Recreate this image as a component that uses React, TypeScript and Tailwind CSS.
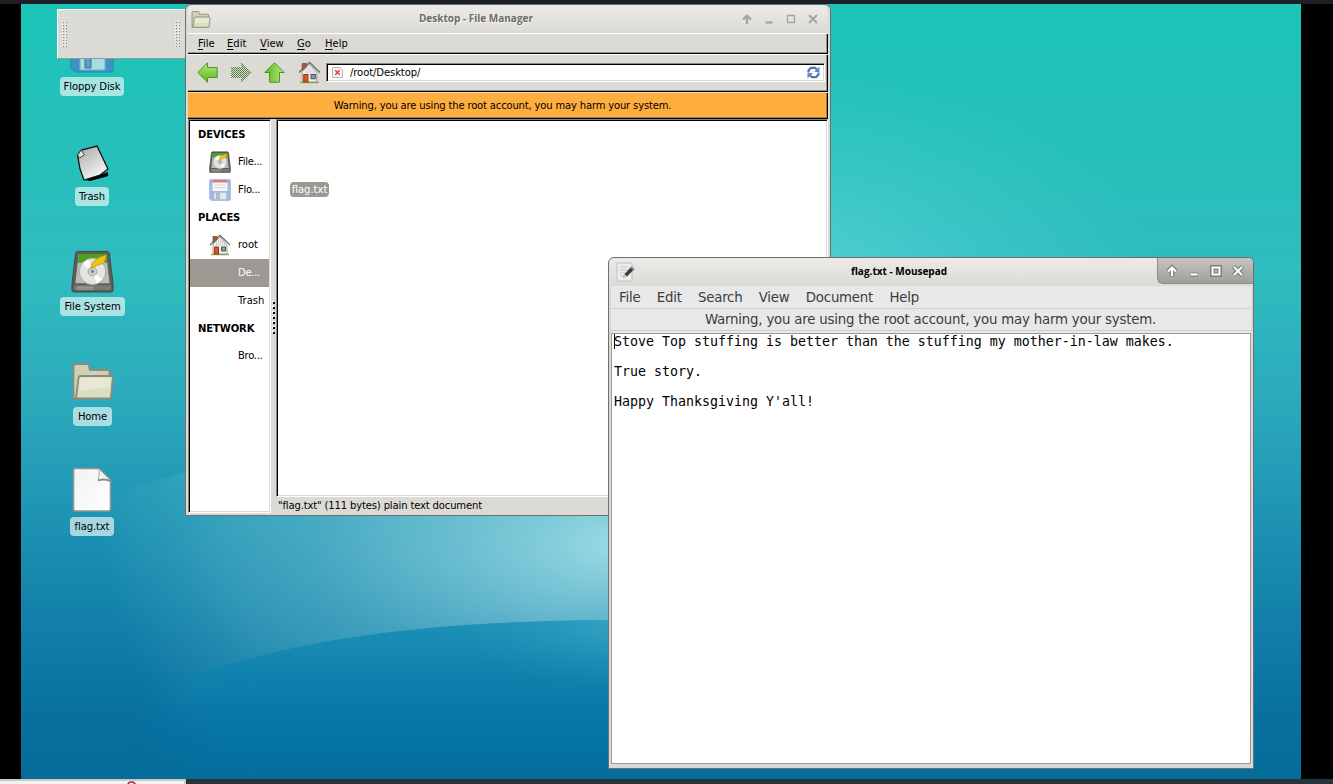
import React from "react";

const SANS = "font-['DejaVu_Sans',sans-serif]";

function Wallpaper() {
  return (
    <svg className="block h-full w-full" viewBox="21 4 1280 775" preserveAspectRatio="none">
      <defs>
        <linearGradient id="sky" x1="0" y1="0" x2="0" y2="1">
          <stop offset="0" stopColor="#1bc4b6" />
          <stop offset="0.35" stopColor="#2fbcbe" />
          <stop offset="0.52" stopColor="#2ba9bc" />
          <stop offset="0.65" stopColor="#1f95b4" />
          <stop offset="0.8" stopColor="#117fa9" />
          <stop offset="0.92" stopColor="#08709f" />
          <stop offset="1" stopColor="#066c9a" />
        </linearGradient>
        <linearGradient id="sea" x1="0" y1="0" x2="0" y2="1">
          <stop offset="0" stopColor="#1c90b6" />
          <stop offset="0.2" stopColor="#1488b1" />
          <stop offset="0.55" stopColor="#0a79a8" />
          <stop offset="0.8" stopColor="#0472a2" />
          <stop offset="1" stopColor="#066d9b" />
        </linearGradient>
        <linearGradient id="seaFade" x1="130" y1="0" x2="220" y2="0" gradientUnits="userSpaceOnUse">
          <stop offset="0" stopColor="#fff" stopOpacity="0" />
          <stop offset="1" stopColor="#fff" />
        </linearGradient>
        <mask id="seaMask" maskUnits="userSpaceOnUse" x="21" y="4" width="1280" height="775">
          <rect x="21" y="4" width="1280" height="775" fill="url(#seaFade)" />
        </mask>
        <radialGradient id="core" cx="0.5" cy="0.5" r="0.5">
          <stop offset="0" stopColor="#a5e0e8" stopOpacity="0.95" />
          <stop offset="0.35" stopColor="#92d5e0" stopOpacity="0.6" />
          <stop offset="0.7" stopColor="#7cc8d6" stopOpacity="0.2" />
          <stop offset="1" stopColor="#6cc0d0" stopOpacity="0" />
        </radialGradient>
        <radialGradient id="upper" cx="0.5" cy="0.5" r="0.5">
          <stop offset="0" stopColor="#66dcdf" stopOpacity="0.75" />
          <stop offset="0.5" stopColor="#5cd6da" stopOpacity="0.35" />
          <stop offset="1" stopColor="#50d2d0" stopOpacity="0" />
        </radialGradient>
        <radialGradient id="seaGlow" cx="0.5" cy="0.5" r="0.5">
          <stop offset="0" stopColor="#4cb4ce" stopOpacity="0.8" />
          <stop offset="1" stopColor="#2a9bc0" stopOpacity="0" />
        </radialGradient>
        <radialGradient id="band" cx="400" cy="530" r="300" gradientUnits="userSpaceOnUse">
          <stop offset="0" stopColor="#7ccbd8" stopOpacity="0.36" />
          <stop offset="0.6" stopColor="#7ccbd8" stopOpacity="0.24" />
          <stop offset="1" stopColor="#7ccbd8" stopOpacity="0" />
        </radialGradient>
        <clipPath id="seaClip">
          <path d="M130 702C250 645 400 619 640 620C900 621 1120 680 1230 779H130Z" />
        </clipPath>
      </defs>
      <rect x="21" y="4" width="1280" height="775" fill="url(#sky)" />
      <ellipse cx="760" cy="290" rx="400" ry="230" fill="url(#upper)" />
      <path d="M40 525Q180 462 330 440H800V779H40Z" fill="url(#band)" />
      <ellipse cx="630" cy="545" rx="450" ry="210" fill="url(#core)" />
      <g mask="url(#seaMask)">
        <path d="M130 702C250 645 400 619 640 620C900 621 1120 680 1230 779H130Z" fill="url(#sea)" />
        <ellipse cx="680" cy="620" rx="250" ry="70" fill="url(#seaGlow)" clipPath="url(#seaClip)" />
      </g>
    </svg>
  );
}

function FolderIcon({ className }: { className: string }) {
  return (
    <svg className={className} viewBox="0 0 42 37">
      <path d="M1.500 35.500V3q0-2 2-2H15q1.500 0 2 2l1 4h18q1.500 0 1.500 1.500V35z" fill="#cfd0b4" stroke="#8b8c7c" strokeWidth="1.800" />
      <path d="M4 35.500L6.500 15q.2-2 2-2H39q2 0 1.800 2L39 33.500q-.2 2-2 2z" fill="#dcdec2" stroke="#8b8c7c" strokeWidth="1.800" />
      <path d="M8.500 15h30l-1.200 10Q20 25 7 28z" fill="#eceddd" opacity=".7" />
    </svg>
  );
}

function DriveIcon({ className }: { className: string }) {
  return (
    <svg className={className} viewBox="0 0 44 44">
      <path d="M7 1.500h30q2 0 2.300 2L43 35v6q0 2-2 2H3q-2 0-2-2v-6L4.700 3.500Q5 1.500 7 1.500z" fill="#5c5e5a" stroke="#454745" />
      <path d="M8 4h28l3.500 30h-35z" fill="#b9bdb6" />
      <path d="M8 4h28l1 9H7z" fill="#4fa01d" />
      <circle cx="22" cy="22" r="13.500" fill="#e4e5e3" stroke="#a9aca6" />
      <path d="M22 22L12 14a13 13 0 0 1 6-4zM22 22l10 8a13 13 0 0 1-6 4z" fill="#fff" />
      <circle cx="22" cy="22" r="4.500" fill="#cdd0ca" stroke="#a4a6a1" />
      <circle cx="22" cy="22" r="1.500" fill="#777" />
      <path d="M36 5l-2 8-8 3-6 3 2-6 6-5z" fill="#edc31c" stroke="#c9a208" />
      <path d="M3 36h38v5H3z" fill="#777a76" />
      <path d="M6 38h17M6 40h17" stroke="#a8aba6" />
    </svg>
  );
}

function FloppyIcon({ className, blue }: { className: string; blue?: boolean }) {
  return (
    <svg className={className} viewBox="0 0 44 44">
      <path d="M3 1h38q2 0 2 2v38q0 2-2 2H5l-4-4V3q0-2 2-2z" fill={blue ? "#3c93c4" : "#9fbbe2"} stroke={blue ? "#2f83b4" : "#88a5cf"} />
      <path d="M7 2h30v22H7z" fill="#f7f7f7" />
      <path d="M7 2h30v5H7z" fill="#e8737a" />
      <path d="M10 12h24M10 17h24" stroke="#c8ccd0" strokeWidth="1.500" />
      <path d="M10 27h25v14H10z" fill={blue ? "#a9dbe0" : "#e3e8ec"} stroke={blue ? "#6db4c4" : "#a4b2c4"} />
      <path d="M15 29h6v10h-6z" fill={blue ? "#5ba3bd" : "#b9c3cf"} stroke={blue ? "#2c7096" : "#8592a4"} />
    </svg>
  );
}

function HomeIcon({ className }: { className: string }) {
  return (
    <svg className={className} viewBox="0 0 22 22">
      <path d="M2 20.500h18" stroke="#8fae3c" strokeWidth="1.500" />
      <path d="M4 2.500h4v6H4z" fill="#c6512b" stroke="#8a3a22" strokeWidth=".8" />
      <path d="M4 10l7-7 7 8v9H4z" fill="#f1f1ef" stroke="#888" strokeWidth=".8" />
      <path d="M7.500 8v4M9.500 6v6M11.500 5v7M13.500 7v5M15.500 9v4" stroke="#c8c8c5" strokeWidth=".8" />
      <path d="M1 11L11 1.300 21 11" fill="none" stroke="#666" strokeWidth="1.200" />
      <path d="M5.500 13h4v7h-4z" fill="#dd5628" stroke="#9d3510" />
      <path d="M12.500 13h4v4h-4z" fill="#8a9aa6" stroke="#4d5358" />
    </svg>
  );
}

function PaperIcon() {
  return (
    <svg className="h-[46px] w-10 -translate-y-px" viewBox="0 0 40 46">
      <defs>
        <linearGradient id="paper" x1="0" y1="0" x2="1" y2="1">
          <stop offset="0" stopColor="#f2f2f2" />
          <stop offset="1" stopColor="#fff" />
        </linearGradient>
      </defs>
      <path d="M3 1.500h24L38.500 13v29q0 2-2 2H3q-1.500 0-1.500-2V3q0-1.500 1.500-1.500z" fill="url(#paper)" stroke="#8e9492" strokeWidth="1.600" />
      <path d="M27 2q1 5-1 11 6-2 12 0z" fill="#f4f4f4" stroke="#aaa" />
      <path d="M26 13.500q6-2 12 .5" fill="none" stroke="#888" strokeWidth="1.800" />
    </svg>
  );
}

function CrumpledIcon() {
  return (
    <svg className="h-[37px] w-9 translate-x-px translate-y-0.5" viewBox="0 0 36 37">
      <defs>
        <linearGradient id="note" x1="0" y1="0" x2=".6" y2="1">
          <stop offset="0" stopColor="#a5a5a5" />
          <stop offset="1" stopColor="#f7f7f7" />
        </linearGradient>
      </defs>
      <path d="M10 35l23-8v4l-3 1-15 4z" fill="#000" />
      <path d="M2.500 10l4-5L22 1l11 23-8 6-16 5-4-11z" fill="url(#note)" stroke="#111" strokeWidth="1.300" />
      <path d="M2.500 10l4-5 3 5-5 3z" fill="#ddd" stroke="#444" />
    </svg>
  );
}

function GreenArrow({ turn }: { turn: string }) {
  return (
    <svg className={"size-[21px] shrink-0 " + turn} viewBox="0 0 21 21">
      <defs>
        <linearGradient id="leaf" x1="0" y1="0" x2="0" y2="1">
          <stop offset="0" stopColor="#b4ea7c" />
          <stop offset="1" stopColor="#57b81c" />
        </linearGradient>
      </defs>
      <path d="M.8 10.500L10.500.8v4.700h9.700v10h-9.700v4.700z" fill="url(#leaf)" stroke="#479a1e" strokeLinejoin="round" />
    </svg>
  );
}

function GhostArrow() {
  return (
    <svg className="size-[21px] shrink-0" viewBox="0 0 21 21" shapeRendering="crispEdges">
      <defs>
        <pattern id="stipple" width="2" height="2" patternUnits="userSpaceOnUse">
          <rect width="1" height="1" fill="#4a7a3a" />
          <rect x="1" y="1" width="1" height="1" fill="#5a8848" />
        </pattern>
      </defs>
      <path d="M21 10.500L11 .5V5H1v11h10v4.500z" fill="url(#stipple)" />
    </svg>
  );
}

function WindowButtons({ active }: { active?: boolean }) {
  const c = active ? "#fff" : "#a5a4a0";
  const glyphs = [
    <path key="u" d="M7 12V4M3 7.500l4-4 4 4" strokeWidth="2.200" />,
    <path key="m" d="M3.500 10.500h7" strokeWidth="2.200" />,
    <path key="x" d="M3.500 3.500h7v7h-7z" strokeWidth={active ? "2" : "1.300"} />,
    <path key="c" d="M3 3l8 8M11 3l-8 8" strokeWidth="2" />,
  ];
  return (
    <div className="flex gap-2">
      {glyphs.map((g, i) => (
        <svg key={i} className="size-3.5" viewBox="0 0 14 14" fill="none">
          {active && <g stroke="#777571" transform="translate(7 7) scale(1.08) translate(-7 -7)" opacity=".9">{React.cloneElement(g, { strokeWidth: 4 })}</g>}
          <g stroke={c}>{g}</g>
        </svg>
      ))}
    </div>
  );
}

function DesktopItem({ label, place, box, children }: { label: string; place: string; box: string; children: React.ReactNode }) {
  return (
    <div className={"absolute flex h-[76px] flex-col items-center justify-end tracking-[-0.1px] " + place}>
      <div className="flex h-[52px] items-center justify-center">{children}</div>
      <div className={"flex h-[19px] shrink-0 items-center justify-center rounded-[4px] bg-[#dff5f3]/70 text-[10px] whitespace-nowrap text-black " + box}>{label}</div>
    </div>
  );
}

function SideRow({ text, icon, selected }: { text: string; icon?: React.ReactNode; selected?: boolean }) {
  return (
    <div className={"flex h-7 items-center pl-[19px] text-[10px] whitespace-nowrap " + (selected ? "bg-[#9b9992] text-white" : "text-black")}>
      <div className="mr-[7px] flex w-[22px] shrink-0 justify-center">{icon}</div>
      <span className={"pb-0.5 " + (text.endsWith("...") ? "tracking-[-0.3px]" : "tracking-[-0.05px]")}>{text}</span>
    </div>
  );
}

function SideHead({ text }: { text: string }) {
  return <div className="flex h-[27px] items-center pl-2 text-[10px] font-bold tracking-[-0.1px]">{text}</div>;
}

function MenuWord({ word, className }: { word: string; className: string }) {
  return (
    <span className={className}>
      <span className="underline underline-offset-2">{word[0]}</span>
      {word.slice(1)}
    </span>
  );
}

function FileManager() {
  return (
    <section className="absolute top-1 left-[185px] flex h-[512px] w-[646px] flex-col rounded-t-md border border-[#6f6f6b] bg-[#dcdad5] px-0.5 pb-0.5">
      <header className="flex h-7 shrink-0 items-center rounded-t-md bg-linear-to-b from-[#ecebe9] to-[#dcdad5] pb-px">
        <FolderIcon className="mt-px ml-[3px] h-[17px] w-5" />
        <h1 className="flex-1 pl-px text-center font-['Open_Sans',sans-serif] text-[10px] font-bold text-[#6d6c69] [text-shadow:1px_1px_#f4f3f1]">Desktop - File Manager</h1>
        <div className="pr-2"><WindowButtons /></div>
      </header>
      <nav className="flex h-[21px] shrink-0 items-center border-t border-b border-t-white border-b-black pl-[10px] text-[10px] shadow-[inset_-1px_0_#000,inset_-2px_-1px_#999790]">
        <MenuWord word="File" className="w-[29px]" />
        <MenuWord word="Edit" className="w-[33px]" />
        <MenuWord word="View" className="w-[37px]" />
        <MenuWord word="Go" className="w-7" />
        <MenuWord word="Help" className="w-7" />
      </nav>
      <div className="flex h-[38px] shrink-0 items-center border-t border-b border-t-white border-b-black pr-[3px] pb-px pl-[9px] shadow-[inset_-1px_0_#000,inset_-2px_-1px_#999790]">
        <GreenArrow turn="" />
        <div className="w-3" />
        <GhostArrow />
        <div className="w-[13px]" />
        <GreenArrow turn="rotate-90" />
        <HomeIcon className="mr-[5px] ml-[13px] size-[23px] shrink-0" />
        <div className="flex h-[19px] flex-1 items-center border border-t-[#888680] border-r-white border-b-white border-l-[#888680] bg-white pr-1 pl-[5px] text-[10px] shadow-[inset_1px_1px_#000,inset_-1px_-1px_#dcdad5]">
          <svg className="mr-[7px] size-[11px]" viewBox="0 0 11 11">
            <path d="M.5.500h8l2 2v8H.5z" fill="#f4f4f4" stroke="#b5b5b5" />
            <path d="M3.200 3.200l4.600 4.600M7.800 3.200L3.200 7.800" stroke="#ee2f2f" strokeWidth="1.300" />
          </svg>
          <span className="flex-1 tracking-[-0.08px]">/root/Desktop/</span>
          <svg className="size-[13px]" viewBox="0 0 13 13" fill="none">
            <path d="M1.500 6.500V4.500L4 1.800h4l2 2M11.500 6.500v2L9 11.200H5l-2-2" stroke="#5277ad" strokeWidth="2.200" />
            <path d="M12.500.5v5.500H7zM.5 12.500V7H6z" fill="#6389bf" />
          </svg>
        </div>
      </div>
      <div className="flex h-[27px] shrink-0 items-center justify-center border-t border-b border-t-[#f0dcb8] border-b-black bg-[#fdae3f] pr-[11px] text-[10px] shadow-[inset_-1px_0_#000,inset_-2px_-1px_#9a7e50]">
        <span className="tracking-[-0.165px] whitespace-nowrap">Warning, you are using the root account, you may harm your system.</span>
      </div>
      <div className="flex min-h-0 flex-1">
        <aside className="flex w-[83px] shrink-0 flex-col border border-t-[#888680] border-r-white border-b-white border-l-[#888680] bg-white pt-px pr-px pl-px shadow-[inset_1px_1px_#000,inset_-1px_-1px_#dcdad5]">
          <SideHead text="DEVICES" />
          <SideRow text="File..." icon={<DriveIcon className="size-[22px]" />} />
          <SideRow text="Flo..." icon={<FloppyIcon className="size-[22px]" />} />
          <SideHead text="PLACES" />
          <SideRow text="root" icon={<HomeIcon className="size-[22px]" />} />
          <SideRow text="De..." selected />
          <SideRow text="Trash" />
          <SideHead text="NETWORK" />
          <SideRow text="Bro..." />
        </aside>
        <div className="flex w-[5px] flex-col justify-center gap-[3px] pt-[3px] pl-[2px]">
          {Array.from({ length: 7 }, (_, i) => (
            <i key={i} className="size-0.5 bg-black shadow-[-1px_-1px_#fff]" />
          ))}
        </div>
        <div className="flex min-w-0 flex-1 flex-col">
          <main className="flex-1 border border-t-[#888680] border-r-white border-b-white border-l-[#888680] bg-white pt-[62px] pl-[13px] shadow-[inset_1px_1px_#000,inset_-1px_-1px_#dcdad5]">
            <span className="flex h-[15px] w-[39px] items-center justify-center rounded-[4px] bg-[#9b9992] text-[10px] text-white">flag.txt</span>
          </main>
          <footer className="flex h-4 items-center pl-0.5 text-[10px] tracking-[-0.14px]">"flag.txt" (111 bytes) plain text document</footer>
        </div>
      </div>
    </section>
  );
}

function Mousepad() {
  const menu = ["File", "Edit", "Search", "View", "Document", "Help"];
  return (
    <section className="absolute top-[257px] left-[608px] flex h-[512px] w-[646px] flex-col rounded-t-md border border-[#6f6f6b] bg-[#dcdad5]">
      <header className="flex h-7 shrink-0 items-start rounded-t-md bg-linear-to-b from-[#ecebe9] to-[#dcdad5]">
        <svg className="mt-1 ml-[7px] size-5" viewBox="0 0 20 20">
          <path d="M1 1h15v18H1z" fill="#ececf0" stroke="#c2c0c8" />
          <path d="M4 5h8M4 8h8M4 11h5M4 14h4" stroke="#c9c9d0" />
          <path d="M7 16l1.500-4L15 5l3 2.500-7 7z" fill="#3c3f40" />
          <path d="M7 16l1.500-4 2.500 2.500z" fill="#e5cf9a" />
          <path d="M15 5l3 2.500" stroke="#8b8bb5" strokeWidth="2" />
        </svg>
        <h1 className="mt-[5px] flex-1 pl-[5px] text-center font-['Open_Sans',sans-serif] text-[10px] leading-4 font-bold text-black">flag.txt - Mousepad</h1>
        <div className="flex h-[26px] w-24 items-center justify-end rounded-tr-md rounded-bl-md border-b border-l border-[#8e8d89] bg-linear-to-b from-[#c6c5c2] to-[#a09f9a] pr-2">
          <WindowButtons active />
        </div>
      </header>
      <div className="mx-0.5 mb-1 flex min-h-0 flex-1 flex-col bg-[#e8e8e8]">
        <nav className="flex h-[23px] shrink-0 items-center gap-[16.300px] border-b border-[#cecece] pt-0.5 pl-2 text-[13.330px] tracking-[-0.22px] text-[#3c3c3c]">
          {menu.map((m) => <span key={m}>{m}</span>)}
        </nav>
        <div className="flex h-[22px] shrink-0 items-center justify-center border-b border-[#cecece] pr-px text-[13.330px] tracking-[-0.2px] whitespace-nowrap text-[#3c3c3c]">
          Warning, you are using the root account, you may harm your system.
        </div>
        <main className="mt-0.5 flex-1 border border-[#999] bg-white pl-0.5 font-['DejaVu_Sans_Mono',monospace] text-[13.290px] leading-[15px] text-black">
          <div className="flex">
            <i className="-mr-px h-[15px] w-px shrink-0 bg-black" />
            <pre className="font-['DejaVu_Sans_Mono',monospace]">{"Stove Top stuffing is better than the stuffing my mother-in-law makes.\n\nTrue story.\n\nHappy Thanksgiving Y'all!"}</pre>
          </div>
        </main>
      </div>
    </section>
  );
}

export default function App() {
  return (
    <div className={"relative flex h-[784px] w-[1333px] flex-col overflow-hidden bg-black " + SANS}>
      <div className="h-1 shrink-0 bg-[#1b1f26]" />
      <div className="h-[775px] shrink-0 px-[21px] pr-8">
        <Wallpaper />
      </div>
      <div className="flex h-[5px] shrink-0 bg-[#27343c]">
        <div className="h-full w-[186px] border-t-2 border-r-2 border-[#c9c9c9] bg-[#f3f2f1]">
          <svg className="ml-[127px] block h-[3px] w-[9px]" viewBox="0 0 9 3">
            <path d="M1 4Q1 1 4.500 1T8 4" fill="none" stroke="#b0272c" strokeWidth="1.600" />
          </svg>
        </div>
      </div>
      <DesktopItem label="Floppy Disk" place="left-[42px] top-[20px] w-[100px]" box="w-16"><FloppyIcon className="size-11" blue /></DesktopItem>
      <DesktopItem label="Trash" place="left-[42px] top-[130px] w-[100px]" box="w-[34px]"><CrumpledIcon /></DesktopItem>
      <DesktopItem label="File System" place="left-[42.500px] top-[240px] w-[100px]" box="w-[65px]"><DriveIcon className="h-[43px] w-[43px]" /></DesktopItem>
      <DesktopItem label="Home" place="left-[42.500px] top-[350px] w-[100px]" box="w-[39px]"><FolderIcon className="h-[37px] w-[42px]" /></DesktopItem>
      <DesktopItem label="flag.txt" place="left-[42px] top-[460px] w-[100px]" box="w-11"><PaperIcon /></DesktopItem>
      <div className="absolute top-[9px] left-[57px] flex h-[50px] w-[128px] items-center justify-between border-t border-b border-l border-t-white border-b-[#8e9c98] border-l-white bg-[#dcdad5] pr-1 pl-1">
        {[0, 1].map((k) => (
          <svg key={k} className="h-[26px] w-[6px]" viewBox="0 0 6 26" shapeRendering="crispEdges">
            {Array.from({ length: 9 }, (_, i) => (
              <g key={i} transform={"translate(0 " + i * 3 + ")"}>
                <path d="M0 0h1v1H0zM3 0h1v1H3z" fill="#fff" />
                <path d="M1 1h1v1H1zM4 1h1v1H4z" fill="#8c8a84" />
              </g>
            ))}
          </svg>
        ))}
      </div>
      <FileManager />
      <Mousepad />
    </div>
  );
}
